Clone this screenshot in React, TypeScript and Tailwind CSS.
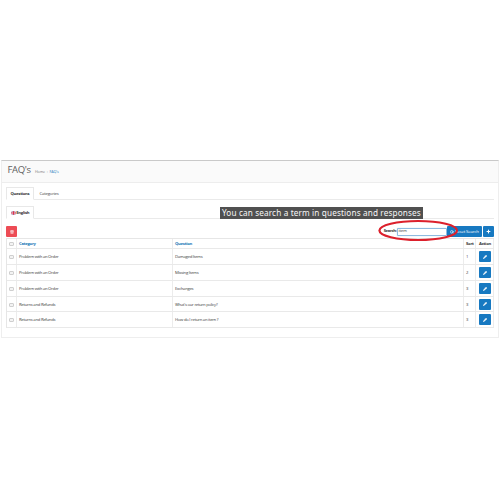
import React from 'react';
import { Pencil, Plus, Search, Trash2 } from 'lucide-react';

const rows = [
  { category: 'Problem with an Order', question: 'Damaged Items', sort: 1, h: 'h-[16px]' },
  { category: 'Problem with an Order', question: 'Missing Items', sort: 2, h: 'h-[16px]' },
  { category: 'Problem with an Order', question: 'Exchanges', sort: 3, h: 'h-[16px]' },
  { category: 'Returns and Refunds', question: "What's our return policy?", sort: 3, h: 'h-[15px]' },
  { category: 'Returns and Refunds', question: 'How do I return an item ?', sort: 3, h: 'h-[16px]' },
];

const grid = 'grid grid-cols-[10px_156px_291px_12px_18px] border-b border-[#e9e9e9]';
const cell = 'flex items-center border-r border-[#ececec]';

function Checkbox() {
  return <span className="ml-[2px] block h-[4px] w-[5px] rounded-[1px] border border-[#cfcfcf] bg-[#f3f3f3]" />;
}

function Flag() {
  return (
    <svg viewBox="0 0 8 6" className="h-[4px] w-[5px]">
      <rect width="8" height="6" fill="#8a8fb4" />
      <path d="M0 0l8 6M8 0L0 6" stroke="#f3dfe5" strokeWidth="1.3" />
      <path d="M4 0v6M0 3h8" stroke="#fff" strokeWidth="2" />
      <path d="M4 0v6M0 3h8" stroke="#d83550" strokeWidth="1.6" />
    </svg>
  );
}

export default function App() {
  return (
    <div className="relative h-[500px] w-[500px] overflow-hidden bg-white pt-[160px] font-['Open_Sans',sans-serif] text-[4.2px] leading-none tracking-[-0.25px] text-[#3c3c3c]">
      <main className="ml-px h-[178px] w-[498px] border border-t-[#c9c9c9] border-[#eeeeee] bg-white">
        <header className="flex h-[22px] items-start border-b border-[#ededed] bg-[#fafafa] pl-[5.5px]">
          <h1 className="mt-[4px] w-[27.5px] whitespace-nowrap text-[9.5px] leading-[10px] tracking-[-0.35px] text-[#606060]">FAQ's</h1>
          <nav className="mt-[9px] flex gap-[1.7px] whitespace-nowrap text-[3.7px] leading-[4px] tracking-[-0.1px]">
            <span className="text-[#777]">Home</span>
            <span className="text-[#999]">›</span>
            <span className="text-[#1877ba]">FAQ's</span>
          </nav>
        </header>

        <section className="pl-[4px] pr-[4px] pt-[4px]">
          <div className="flex h-[13px] border-b border-[#eaeaea]">
            <div className="flex h-[13px] w-[28px] items-center justify-center border border-b-white border-[#e8e8e8] bg-white pt-px font-bold text-[#333]">
              Questions
            </div>
            <div className="flex h-[13px] items-center pl-[5.5px] pt-px tracking-[-0.16px]">Categories</div>
          </div>

          <div className="mt-[6px] flex h-[13px] border-b border-[#eaeaea]">
            <div className="flex h-[13px] w-[28px] items-center justify-center gap-[0.6px] border border-b-white border-[#e8e8e8] bg-white pt-px font-bold text-[#333]">
              <Flag />
              English
            </div>
          </div>

          <div className="mt-[7px] flex h-[11px] items-center justify-between">
            <button className="flex h-[11px] w-[11px] items-center justify-center rounded-[1px] bg-[#ed4c55] text-white">
              <Trash2 className="h-[4px] w-[4px]" strokeWidth={3} />
            </button>
            <div className="flex h-[11px] items-center">
              <label className="font-bold tracking-[-0.35px] text-[#333]">Search:</label>
              <div className="ml-[0.5px] flex h-[8px] w-[50px] items-center rounded-[1px] border border-[#8fbbe0] bg-white pl-[0.5px] tracking-[-0.1px] shadow-[0_0_1px_#8dbde3]">
                item
              </div>
              <button className="flex h-[11px] w-[35px] items-center justify-center gap-[0.5px] whitespace-nowrap rounded-[1px] bg-[#1779c1] text-[4.3px] tracking-[-0.15px] text-white">
                <Search className="h-[4px] w-[4px]" strokeWidth={3.5} />
                Reset Search
              </button>
              <button className="ml-px flex h-[11px] w-[11px] items-center justify-center rounded-[1px] bg-[#1779c1] text-white">
                <Plus className="h-[5px] w-[5px]" strokeWidth={5} />
              </button>
            </div>
          </div>

          <div className="mt-px w-[488px] border-l border-t border-[#e6e6e6]">
            <div className={grid + ' h-[10px] font-bold'}>
              <div className={cell}><Checkbox /></div>
              <div className={cell + ' pl-[2px] pt-px text-[#1877b6]'}>Category</div>
              <div className={cell + ' pl-[2px] pt-px text-[#1877b6]'}>Question</div>
              <div className={cell + ' pl-[2px] pt-px text-[#333]'}>Sort</div>
              <div className={cell + ' pl-[3px] pt-px text-[#333]'}>Action</div>
            </div>
            {rows.map((row) => (
              <div key={row.question} className={grid + ' ' + row.h}>
                <div className={cell + ' pt-px'}><Checkbox /></div>
                <div className={cell + ' pl-[2px] pt-[2px]'}>{row.category}</div>
                <div className={cell + ' pl-[2px] pt-[2px]'}>{row.question}</div>
                <div className={cell + ' pl-[2px] pt-[2px]'}>{row.sort}</div>
                <div className={cell + ' pl-[3px]'}>
                  <button className="flex h-[11px] w-[12px] shrink-0 items-center justify-center rounded-[1px] bg-[#1779c1] text-white">
                    <Pencil className="h-[4px] w-[4px]" fill="currentColor" strokeWidth={3} />
                  </button>
                </div>
              </div>
            ))}
          </div>
        </section>
      </main>

      <div className="absolute left-[220px] top-[207px] flex h-[12px] w-[203px] items-center whitespace-nowrap bg-[#505050] pl-[2px] font-['Noto_Sans',sans-serif] text-[8.2px] leading-[12px] tracking-[0.14px] text-[#f7f7f7]">
        You can search a term in questions and responses
      </div>
      <svg className="pointer-events-none absolute left-[376px] top-[217px] h-[26px] w-[84px]" viewBox="0 0 84 26">
        <ellipse cx="42.2" cy="13.5" rx="38.8" ry="9.5" fill="none" stroke="#dc202c" strokeWidth="2.2" />
      </svg>
    </div>
  );
}
